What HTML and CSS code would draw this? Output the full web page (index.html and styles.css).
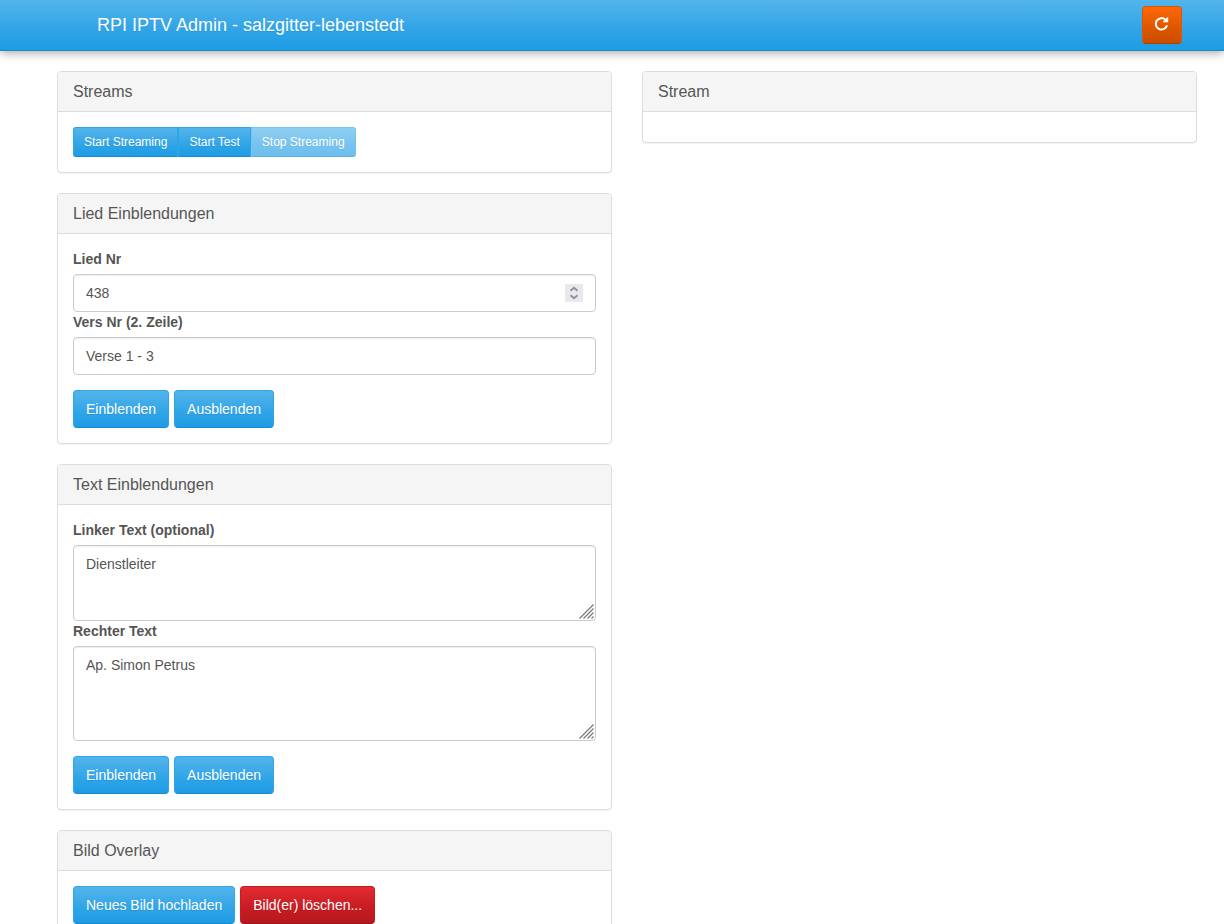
FILE: index.html
```html
<!DOCTYPE html>
<html lang="de">
<head>
<meta charset="utf-8">
<meta name="viewport" content="width=device-width, initial-scale=1">
<title>RPI IPTV Admin</title>
<link rel="stylesheet" href="styles.css">
</head>
<body>
<header class="navbar">
  <div class="container navbar-inner">
    <a class="brand" href="#">RPI IPTV Admin - salzgitter-lebenstedt</a>
    <button class="btn btn-warning btn-icon" type="button" aria-label="Neu laden">
      <svg class="icon" viewBox="0 0 14 14" aria-hidden="true">
        <path d="M10.4 2.7A5.7 5.7 0 1 0 12 8.2" fill="none" stroke="currentColor" stroke-width="2"/>
        <path d="M13.2 0V5.2H8V4L9.6 3.4L12 0.6Z" fill="currentColor"/>
      </svg>
    </button>
  </div>
</header>
<main class="container columns">
  <div class="column">
    <section class="panel">
      <h2 class="panel-heading">Streams</h2>
      <div class="panel-body">
        <div class="btn-group">
          <button class="btn btn-small" type="button">Start Streaming</button>
          <button class="btn btn-small" type="button">Start Test</button>
          <button class="btn btn-small" type="button" disabled>Stop Streaming</button>
        </div>
      </div>
    </section>
    <section class="panel">
      <h2 class="panel-heading">Lied Einblendungen</h2>
      <form class="panel-body">
        <label class="label" for="lied">Lied Nr</label>
        <div class="field">
          <input class="control" id="lied" type="number" value="438">
          <svg class="spinner" viewBox="0 0 18 18" aria-hidden="true">
            <path class="spinner-box" d="M0 0H18V18H0Z"/>
            <path class="spinner-arrow" d="M5.5 6.7L9 3.7L12.5 6.7M5.5 11.3L9 14.3L12.5 11.3"/>
          </svg>
        </div>
        <label class="label" for="vers">Vers Nr (2. Zeile)</label>
        <input class="control" id="vers" type="text" value="Verse 1 - 3">
        <div class="actions">
          <button class="btn" type="button">Einblenden</button>
          <button class="btn" type="button">Ausblenden</button>
        </div>
      </form>
    </section>
    <section class="panel">
      <h2 class="panel-heading">Text Einblendungen</h2>
      <form class="panel-body">
        <label class="label" for="links">Linker Text (optional)</label>
        <div class="field">
          <textarea class="control area-short" id="links">Dienstleiter</textarea>
          <svg class="grip" viewBox="0 0 15 15" aria-hidden="true">
            <path d="M0.5 14.5L14.5 0.5M4.5 14.5L14.5 4.5M8.5 14.5L14.5 8.5M12.5 14.5L14.5 12.5"/>
          </svg>
        </div>
        <label class="label" for="rechts">Rechter Text</label>
        <div class="field">
          <textarea class="control area-tall" id="rechts">Ap. Simon Petrus</textarea>
          <svg class="grip" viewBox="0 0 15 15" aria-hidden="true">
            <path d="M0.5 14.5L14.5 0.5M4.5 14.5L14.5 4.5M8.5 14.5L14.5 8.5M12.5 14.5L14.5 12.5"/>
          </svg>
        </div>
        <div class="actions">
          <button class="btn" type="button">Einblenden</button>
          <button class="btn" type="button">Ausblenden</button>
        </div>
      </form>
    </section>
    <section class="panel">
      <h2 class="panel-heading">Bild Overlay</h2>
      <div class="panel-body">
        <div class="btn-row">
          <button class="btn" type="button">Neues Bild hochladen</button>
          <button class="btn btn-danger" type="button">Bild(er) löschen...</button>
        </div>
      </div>
    </section>
  </div>
  <div class="column">
    <section class="panel">
      <h2 class="panel-heading">Stream</h2>
      <div class="panel-body"></div>
    </section>
  </div>
</main>
</body>
</html>
```

FILE: styles.css
```css
* { box-sizing: border-box; }

html { scrollbar-width: none; }

body {
  margin: 0;
  background: #fff;
  color: #555;
  font: 14px/20px "Liberation Sans", Arial, sans-serif;
}

.container {
  max-width: 1170px;
  margin: 0 auto;
}

.navbar {
  background: linear-gradient(#54b4eb, #2fa4e7 60%, #1d9ce5);
  border-bottom: 1px solid #178acc;
  box-shadow: 0 1px 10px rgba(0, 0, 0, 0.4);
}

.navbar-inner {
  display: flex;
  align-items: center;
  justify-content: space-between;
  height: 50px;
  padding: 0 15px 0 70px;
}

.brand {
  color: #fff;
  font-size: 18px;
  text-decoration: none;
  text-shadow: 0 1px 0 rgba(0, 0, 0, 0.1);
}

.columns {
  display: grid;
  grid-template-columns: 1fr 1fr;
  gap: 30px;
  align-items: start;
  padding: 20px 0 20px 30px;
}

.column {
  display: grid;
  gap: 20px;
}

.panel {
  border: 1px solid #ddd;
  border-radius: 4px;
  background: #fff;
  box-shadow: 0 1px 1px rgba(0, 0, 0, 0.05);
}

.panel-heading {
  margin: 0;
  padding: 10px 15px;
  border-bottom: 1px solid #ddd;
  border-radius: 3px 3px 0 0;
  background: #f5f5f5;
  font-size: 16px;
  font-weight: 400;
  line-height: 19px;
}

.panel-body { padding: 15px; }

.label {
  display: block;
  margin-bottom: 5px;
  font-weight: 700;
}

.field { position: relative; }

.control {
  display: block;
  width: 100%;
  height: 38px;
  margin: 0;
  padding: 8px 12px;
  border: 1px solid #ccc;
  border-radius: 4px;
  background: #fff;
  box-shadow: inset 0 1px 1px rgba(0, 0, 0, 0.075);
  color: #555;
  font: inherit;
  appearance: textfield;
  resize: vertical;
}

.control::-webkit-resizer { display: none; }

.area-short { height: 76px; }
.area-tall { height: 95px; }

.spinner {
  position: absolute;
  top: 10px;
  right: 13px;
  width: 18px;
  height: 18px;
  pointer-events: none;
}

.spinner-box { fill: #e9e9ed; }

.spinner-arrow {
  fill: none;
  stroke: #8f8f9d;
  stroke-width: 1.8;
}

.grip {
  position: absolute;
  right: 2px;
  bottom: 2px;
  width: 15px;
  height: 15px;
  fill: none;
  stroke: #777;
  stroke-width: 1.2;
  pointer-events: none;
}

.actions { margin-top: 15px; }

.actions,
.btn-row {
  display: flex;
  gap: 5px;
}

.btn {
  padding: 8px 12px;
  border: 1px solid #2fa4e7;
  border-bottom-color: #178acc;
  border-radius: 4px;
  background: linear-gradient(#54b4eb, #2fa4e7 60%, #1d9ce5);
  color: #fff;
  font: inherit;
  text-shadow: 0 1px 0 rgba(0, 0, 0, 0.1);
}

.btn-danger {
  border-color: #c71c22;
  border-bottom-color: #9a161a;
  background: linear-gradient(#e12b31, #c71c22 60%, #b5191f);
}

.btn-warning {
  border-color: #dd5600;
  border-bottom-color: #aa4200;
  background: linear-gradient(#ff6707, #dd5600 60%, #c94e00);
}

.btn-icon {
  display: flex;
  align-items: center;
  height: 38px;
  padding: 7px 12px 9px;
}

.icon {
  width: 14px;
  height: 14px;
}

.btn-group { display: flex; }

.btn-small {
  padding: 5px 10px;
  border-radius: 0;
  font-size: 12px;
  line-height: 18px;
}

.btn-small:first-child { border-radius: 3px 0 0 3px; }
.btn-small:last-child { border-radius: 0 3px 3px 0; }
.btn-small:disabled { opacity: 0.65; }
```
